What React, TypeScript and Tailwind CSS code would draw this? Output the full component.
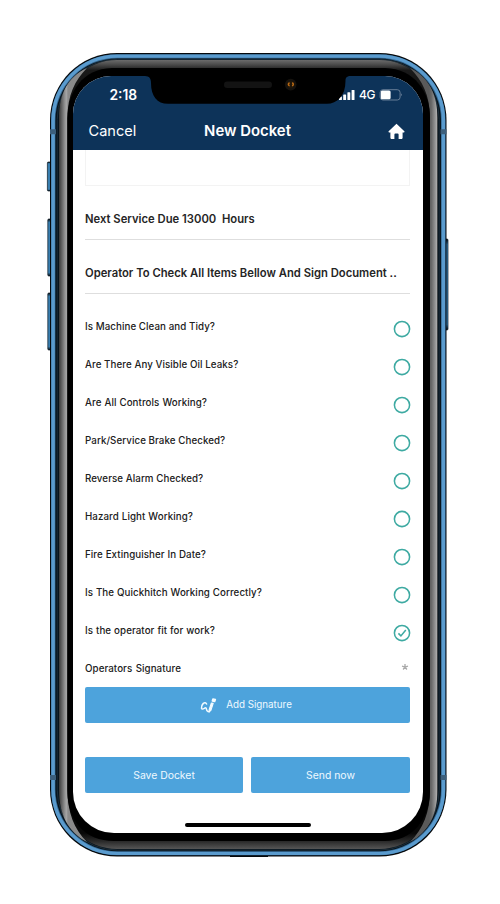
import React from "react";

const checks = [
  { label: "Is Machine Clean and Tidy?", width: "w-[129px]", done: false },
  { label: "Are There Any Visible Oil Leaks?", width: "w-[153px]", done: false },
  { label: "Are All Controls Working?", width: "w-[122px]", done: false },
  { label: "Park/Service Brake Checked?", width: "w-[139px]", done: false },
  { label: "Reverse Alarm Checked?", width: "w-[118px]", done: false },
  { label: "Hazard Light Working?", width: "w-[108px]", done: false },
  { label: "Fire Extinguisher In Date?", width: "w-[121px]", done: false },
  { label: "Is The Quickhitch Working Correctly?", width: "w-[177px]", done: false },
  { label: "Is the operator fit for work?", width: "w-[130px]", done: true },
];

function DeviceFrame() {
  return (
    <svg className="absolute inset-0" width="500" height="904" viewBox="0 0 500 904" fill="none">
      <defs>
        <linearGradient id="bezel" x1="0" y1="60" x2="0" y2="849" gradientUnits="userSpaceOnUse">
          <stop offset="0" stopColor="#6b6b6b" />
          <stop offset=".006" stopColor="#494949" />
          <stop offset=".013" stopColor="#191919" />
          <stop offset=".05" stopColor="#111" />
          <stop offset=".98" stopColor="#080808" />
          <stop offset=".99" stopColor="#292929" />
          <stop offset="1" stopColor="#555" />
        </linearGradient>
        <linearGradient id="leftShine" x1="59" y1="0" x2="68" y2="0" gradientUnits="userSpaceOnUse">
          <stop stopColor="#393939" />
          <stop offset=".65" stopColor="#929292" />
          <stop offset=".82" stopColor="#a5a5a5" />
          <stop offset="1" stopColor="#8a8a8a" />
        </linearGradient>
        <linearGradient id="rightShine" x1="429" y1="0" x2="438" y2="0" gradientUnits="userSpaceOnUse">
          <stop stopColor="#5a5a5a" />
          <stop offset=".25" stopColor="#666" />
          <stop offset=".7" stopColor="#969696" />
          <stop offset=".85" stopColor="#aaa" />
          <stop offset="1" stopColor="#555" />
        </linearGradient>
        <linearGradient id="button" x1="0" y1="0" x2="0" y2="1">
          <stop stopColor="#05090c" />
          <stop offset=".06" stopColor="#397eaf" />
          <stop offset=".94" stopColor="#397eaf" />
          <stop offset="1" stopColor="#05090c" />
        </linearGradient>
      </defs>
      <g fill="url(#button)" stroke="#0b1823" strokeWidth=".7">
        <rect x="47.4" y="162" width="4" height="29" rx="1" />
        <rect x="47.8" y="219" width="4" height="57" rx="1" />
        <rect x="47.8" y="293" width="4" height="57" rx="1" />
        <rect x="444.5" y="239" width="3.5" height="91" rx="1" />
      </g>
      <rect x="50" y="53" width="396.5" height="803.5" rx="67" fill="#05090c" />
      <path d="M230 856.3h38" stroke="#05090c" strokeWidth="1.6" />
      <rect x="51" y="54.2" width="394.5" height="801" rx="66" fill="#34658d" />
      <rect x="53.1" y="56.1" width="390.3" height="797.3" rx="64" stroke="#5a9bce" strokeWidth="3.4" />
      <rect x="55.4" y="58.4" width="385.6" height="792.8" rx="62" fill="#07131c" />
      <rect x="57.2" y="59.3" width="382" height="790.8" rx="60" stroke="#1c2e3a" />
      <rect x="59" y="60" width="378.5" height="789" rx="58" fill="url(#bezel)" />
      <path d="M87 68C67 77 59 95 59 118V790C59 814 68 832 87 842C74 829 67.5 812 67.5 790V118C67.5 95 75 80 87 68Z" fill="url(#leftShine)" />
      <path d="M410 68C429 77 437.5 95 437.5 118V790C437.5 814 429 832 410 842C423 829 430 812 430 790V118C430 95 422 80 410 68Z" fill="url(#rightShine)" />
      <path d="M67.3 790V118C68 92 82 69 112 68H385C415 69 430 92 430 118V790C430 821 411 841 385 841H114C85 841 67.3 821 67.3 790Z" fill="#000" />
      <path d="M50 131.7h6M440.5 131.7h6M50 777.5h6M440.5 777.5h6" stroke="#3c5f7c" strokeWidth="5" />
    </svg>
  );
}

function Notch() {
  return (
    <svg className="absolute left-[72px] top-0" width="206" height="30" viewBox="145 76 206 30">
      <path d="M144 75H352V76C347 76 345.5 77 345.5 81C345.5 96 337 103.8 327 103.8H168C157 103.8 151 96 151 83C151 78 149 76 144 76Z" fill="#000" />
      <rect x="224" y="81.5" width="48" height="6.5" rx="3.2" fill="#131313" />
      <circle cx="290.7" cy="84.6" r="5.8" fill="#15120e" />
      <circle cx="290.7" cy="84.6" r="3.7" fill="#21170a" />
      <path d="M289.7 83c-1.8.1-1.8 2.6 0 2.8M292 83c1.8.1 1.8 2.6 0 2.8" fill="none" stroke="#b86915" strokeWidth="1.5" />
    </svg>
  );
}

function FitText({ children, className }: { children: string; className: string }) {
  return <span className={`block whitespace-nowrap text-justify tracking-[0.07px] [text-align-last:justify] ${className}`}>{children}</span>;
}

function Check({ done }: { done: boolean }) {
  return (
    <svg className="-mr-[0.5px]" width="18" height="18" viewBox="0 0 18 18" fill="none" stroke="#3eaaa2" strokeWidth="1.55">
      <circle cx="9" cy="9" r="7.6" />
      {done && <path d="m5.4 9.4 2.5 2.5L12.8 6" />}
    </svg>
  );
}

export default function App() {
  return (
    <main className="relative h-[904px] w-[500px] overflow-hidden bg-white pl-[73px] pt-[76px] font-['Inter',sans-serif]">
      <DeviceFrame />
      <section className="relative h-[757px] w-[350px] overflow-hidden rounded-t-[38px] rounded-b-[41px] bg-white">
        <header className="h-[73.5px] bg-[#0d3359] text-white">
          <div className="flex h-[36px] items-center pl-[36.5px] pr-[20px] pt-[2px]">
            <span className="text-[13.8px] leading-4 font-semibold">2:18</span>
            <div className="ml-auto flex items-center">
              <svg width="18" height="12" viewBox="0 0 18 12" fill="#fff">
                <rect x="1" y="7.5" width="2.9" height="3.5" rx=".6" />
                <rect x="5.2" y="5.5" width="2.9" height="5.5" rx=".6" />
                <rect x="9.4" y="3.2" width="2.9" height="7.8" rx=".6" />
                <rect x="13.6" y="1" width="2.9" height="10" rx=".6" />
              </svg>
              <span className="ml-[3px] w-[17px] text-[12px] leading-4 font-medium tracking-[-0.3px]">4G</span>
              <svg className="ml-[3px]" width="24" height="12" viewBox="0 0 24 12" fill="none">
                <rect x="1.1" y=".7" width="20" height="10.3" rx="2.8" stroke="#71869d" strokeWidth=".9" />
                <rect x="1.8" y="1.4" width="9.8" height="8.8" rx="1.5" fill="#fff" />
                <path d="M22.2 4.3q1.8 1.5 0 3Z" fill="#71869d" />
              </svg>
            </div>
          </div>
          <div className="grid h-[37px] grid-cols-[1fr_90px_1fr] items-center pl-[15.5px] pr-[18px] pt-[1px]">
            <span className="text-[14.6px] leading-5">Cancel</span>
            <span className="whitespace-nowrap pl-[1.5px] text-center text-[14.9px] leading-5 font-semibold">New Docket</span>
            <svg className="justify-self-end" width="17" height="17" viewBox="0 0 17 17" fill="#fff">
              <path d="M8.5.8 16.6 8.6l-.5 1h-1.5v5.5q0 .8-.8.8h-3.2v-4.4q0-1.1-1-1.1H7.4q-1 0-1 1.1v4.4H3.2q-.8 0-.8-.8V9.6H.9l-.5-1Z" />
            </svg>
          </div>
        </header>
        <div className="pl-[12px] pr-[13px]">
          <div className="h-[36.5px] border border-t-0 border-[#f3f3f3]" />
          <h2 className="flex h-[54px] items-center whitespace-pre border-b border-[#dedede] pt-[13.5px] text-[11.25px] leading-4 font-semibold text-[#252525]">Next Service Due 13000  Hours</h2>
          <h2 className="flex h-[54px] items-center whitespace-nowrap border-b border-[#dedede] pt-[13.5px] text-[11.25px] leading-4 font-semibold text-[#252525]">Operator To Check All Items Bellow And Sign Document ..</h2>
          <div className="pt-[16px]">
            {checks.map((item) => (
              <div key={item.label} className="flex h-[38px] items-center justify-between">
                <FitText className={`-translate-y-[2px] text-[9.75px] leading-4 font-medium text-[#202020] ${item.width}`}>{item.label}</FitText>
                <Check done={item.done} />
              </div>
            ))}
          </div>
          <div className="flex h-[34px] items-center justify-between pr-[1px] text-[9.75px] font-medium text-[#202020]">
            <FitText className="w-[96px] leading-4">Operators Signature</FitText>
            <svg className="-translate-y-[2px]" width="8" height="8" viewBox="0 0 8 8" fill="none" stroke="#aaa" strokeWidth="1.3"><path d="M4 4V1M4 4l3-.9M4 4l1.9 2.5M4 4 2.1 6.5M4 4 1 3.1" /></svg>
          </div>
          <button className="mt-[1px] flex h-[36px] w-full items-center justify-center rounded-[2px] bg-[#4da3dc] pr-[3px] pt-[1px] text-[9.8px] text-[#eff9ff]">
            <svg className="mr-[8px]" width="18" height="18" viewBox="0 0 18 18" fill="none" stroke="#f3fbff" strokeWidth="1.5" strokeLinecap="round" strokeLinejoin="round">
              <path d="M6.6 7Q5.4 4.9 3.3 6.4Q1.2 8.5 1.5 11.2Q2 12.9 4.3 11.4Q6.3 10 6.4 12Q6.7 14.7 9.2 14.7" />
              <path d="m13.2 6.3-2.3 7L9.2 14.8V12.4L11.4 6Z" fill="#f3fbff" strokeWidth="1.1" />
              <path d="m12.9 2 2.5.5-.7 2-2.4-.6Z" fill="#f3fbff" />
            </svg>
            Add Signature
          </button>
          <div className="mt-[34px] grid grid-cols-[158px_159px] gap-[8px] text-[10.4px] text-[#eff9ff]">
            <button className="h-[36px] rounded-[2px] bg-[#4da3dc] pt-[1px]">Save Docket</button>
            <button className="h-[36px] rounded-[2px] bg-[#4da3dc] pt-[1px]">Send now</button>
          </div>
        </div>
        <div className="absolute bottom-[6px] left-[112px] h-[4px] w-[126px] rounded-full bg-black" />
        <Notch />
      </section>
    </main>
  );
}
